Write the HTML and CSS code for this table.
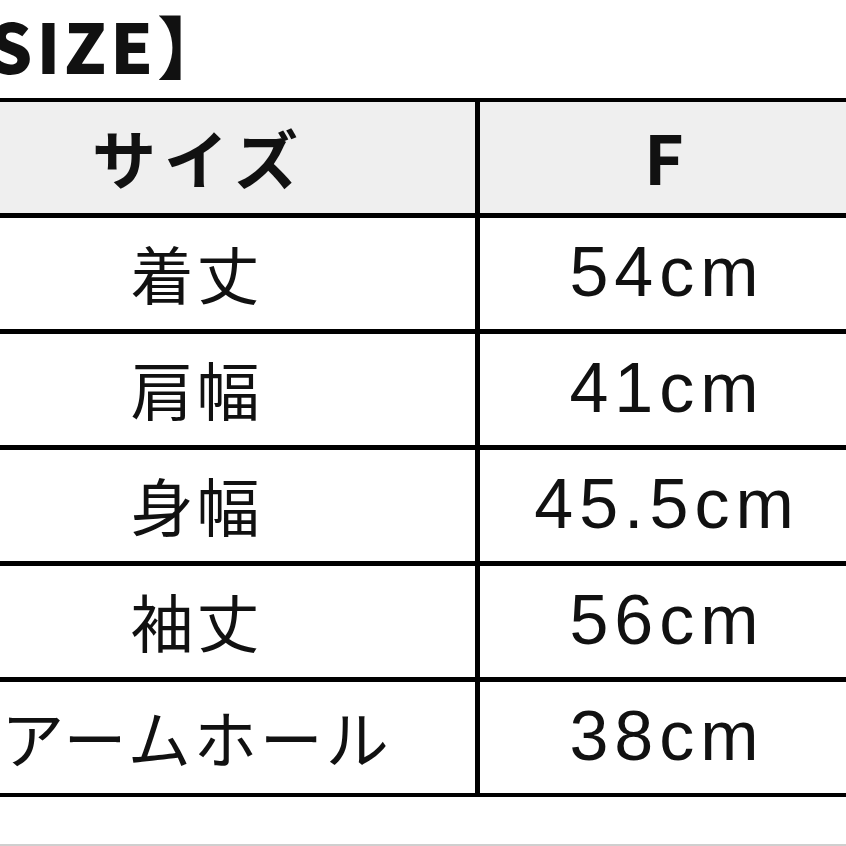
FILE: index.html
```html
<!DOCTYPE html>
<html lang="ja">
<head>
<meta charset="utf-8">
<title>SIZE</title>
<link rel="stylesheet" href="styles.css">
</head>
<body>
<div class="page">
  <h1 class="title">【SIZE】</h1>
  <div class="size-table">
    <div class="cell head label">サイズ</div>
    <div class="cell head value">F</div>
    <div class="cell label">着丈</div>
    <div class="cell value">54cm</div>
    <div class="cell label">肩幅</div>
    <div class="cell value">41cm</div>
    <div class="cell label">身幅</div>
    <div class="cell value">45.5cm</div>
    <div class="cell label">袖丈</div>
    <div class="cell value">56cm</div>
    <div class="cell label">アームホール</div>
    <div class="cell value">38cm</div>
  </div>
</div>
</body>
</html>
```
FILE: styles.css
```css
html, body {
  margin: 0;
  padding: 0;
  background: #fff;
}
.page {
  width: 846px;
  height: 846px;
  box-sizing: border-box;
  overflow: hidden;
  border-bottom: 2px solid #cfcfcf;
  color: #111;
  font-family: "Noto Sans CJK JP", "Liberation Sans", sans-serif;
}
.title {
  margin: 0 0 17px -83px;
  padding-top: 11px;
  height: 70px;
  font-size: 68px;
  line-height: 1;
  font-weight: 900;
  letter-spacing: 4px;
  white-space: nowrap;
}
.size-table {
  display: grid;
  grid-template-columns: 560px 368px;
  grid-auto-rows: 111px;
  gap: 5px;
  padding: 4px;
  margin-left: -89px;
  width: max-content;
  background: #000;
}
.cell {
  background: #fff;
  display: flex;
  align-items: center;
  justify-content: center;
  white-space: nowrap;
  padding-bottom: 4px;
  box-sizing: border-box;
}
.cell.head {
  background: #efefef;
  font-weight: 700;
}
.label {
  font-size: 63px;
  letter-spacing: 3px;
  text-indent: 3px;
}
.head.label {
  font-size: 64px;
  letter-spacing: 8px;
  text-indent: 8px;
}
.value {
  font-family: "Liberation Sans", "Noto Sans", sans-serif;
  font-size: 70px;
  letter-spacing: 6px;
  text-indent: 6px;
}
.head.value {
  font-family: "Noto Sans CJK JP", "Liberation Sans", sans-serif;
  font-size: 68px;
}
```
